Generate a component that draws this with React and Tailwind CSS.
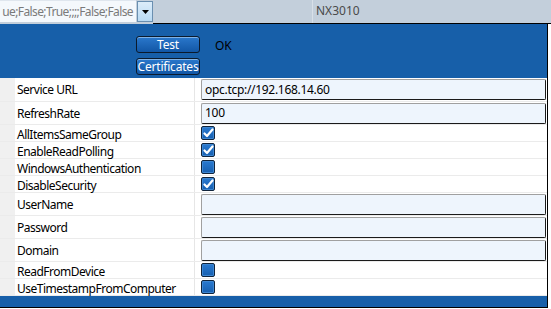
import React from 'react';

const font = { fontFamily: '"Noto Sans", "Open Sans", sans-serif' };

const rows = [
    { label: 'Service URL', type: 'text', value: 'opc.tcp://192.168.14.60', first: true },
    { label: 'RefreshRate', type: 'text', value: '100' },
    { label: 'AllItemsSameGroup', type: 'check', value: true },
    { label: 'EnableReadPolling', type: 'check', value: true },
    { label: 'WindowsAuthentication', type: 'check', value: false },
    { label: 'DisableSecurity', type: 'check', value: true },
    { label: 'UserName', type: 'text', value: '' },
    { label: 'Password', type: 'text', value: '' },
    { label: 'Domain', type: 'text', value: '' },
    { label: 'ReadFromDevice', type: 'check', value: false },
    { label: 'UseTimestampFromComputer', type: 'check', value: false },
];

const CheckBox = ({ checked }) => (
    <div className="w-[14px] h-[14px] rounded-[2px] border border-[#10243c] bg-gradient-to-b from-[#2a7ad0] to-[#165fb0] flex items-center justify-center shadow-[inset_0_0_0_1px_#3d86d2]">
        {checked && (
            <svg width="11" height="10" viewBox="0 0 11 10">
                <path d="M1.5 5.5 L4 8 L9.5 1.5" fill="none" stroke="#ffffff" strokeWidth="2.2" strokeLinecap="round" strokeLinejoin="round" />
            </svg>
        )}
    </div>
);

const TextBox = ({ value }) => (
    <div className="h-[21px] w-[345px] rounded-[2px] bg-[#eef5fd] border border-t-[#a0a0a0] border-l-[#a0a0a0] border-r-[#1a1a1a] border-b-[#1a1a1a] flex items-center pl-[3px] text-[12px] tracking-[-0.3px] text-black whitespace-nowrap">
        {value}
    </div>
);

const BlueButton = ({ children }) => (
    <button className="w-[64px] h-[17px] rounded-[3px] border border-[#0b1a2c] bg-gradient-to-b from-[#2a78cc] to-[#1257a6] shadow-[inset_0_1px_0_#7fb2e6] text-white text-[12px] tracking-[-0.2px] leading-none flex items-center justify-center">
        {children}
    </button>
);

const App = () => {
    return (
        <div className="w-[551px] h-[309px] overflow-hidden bg-white" style={font}>
            {/* Top row */}
            <div className="flex h-[24px] bg-[#c3cfdb]">
                <div className="w-[136px] h-[22px] bg-[#f4f8fc] flex justify-end items-center overflow-hidden whitespace-nowrap text-[12px] tracking-[-0.6px] text-[#7a7a7a] pr-[3px] border-t border-[#dfe6ee]">
                    ue;False;True;;;;False;False
                </div>
                <div className="w-[16px] h-[21px] mt-[1px] ml-[1px] bg-gradient-to-b from-[#dcedfa] to-[#b9daf3] border border-[#6a8fb0] flex items-center justify-center">
                    <svg width="7" height="4" viewBox="0 0 7 4">
                        <path d="M0 0 H7 L3.5 4 Z" fill="#000" />
                    </svg>
                </div>
                <div className="flex-1 flex border-b border-black">
                    <div className="w-[160px] border-r border-[#d8e0e8]" />
                    <div className="pl-[3px] pt-[2px] text-[12px] text-[#4a4a4a]">NX3010</div>
                </div>
            </div>

            <div className="flex">
                <div className="w-[548px] bg-[#175fa9] border-r border-black border-b flex flex-col">
                    {/* Header */}
                    <div className="h-[54px] flex pt-[12px]">
                        <div className="ml-[136px] flex flex-col gap-[5px]">
                            <BlueButton>Test</BlueButton>
                            <BlueButton>Certificates</BlueButton>
                        </div>
                        <div className="ml-[15px] mt-[1px] text-[12px] text-black">OK</div>
                    </div>

                    {/* Property grid */}
                    <div className="bg-white flex flex-col">
                        {rows.map((row) => (
                            <div
                                key={row.label}
                                className={`flex border-b border-[#ebebeb] ${row.type === 'text' ? (row.first ? 'h-[24px]' : 'h-[23px]') : 'h-[17px]'}`}
                            >
                                <div className="w-[15px] bg-[#f0f0f0]" />
                                <div className={`w-[180px] border-r border-[#e6e6e6] flex items-center pl-[2px] text-[12px] tracking-[-0.5px] text-black whitespace-nowrap ${row.type === 'check' ? 'pt-[3px]' : 'pt-[1px]'}`}>
                                    {row.label}
                                </div>
                                <div className="flex-1 flex items-center pl-[6px]">
                                    {row.type === 'text' ? <TextBox value={row.value} /> : <CheckBox checked={row.value} />}
                                </div>
                            </div>
                        ))}
                    </div>

                    <div className="h-[11px]" />
                </div>
                <div className="flex-1 bg-white" />
            </div>
        </div>
    );
};

export default App;
